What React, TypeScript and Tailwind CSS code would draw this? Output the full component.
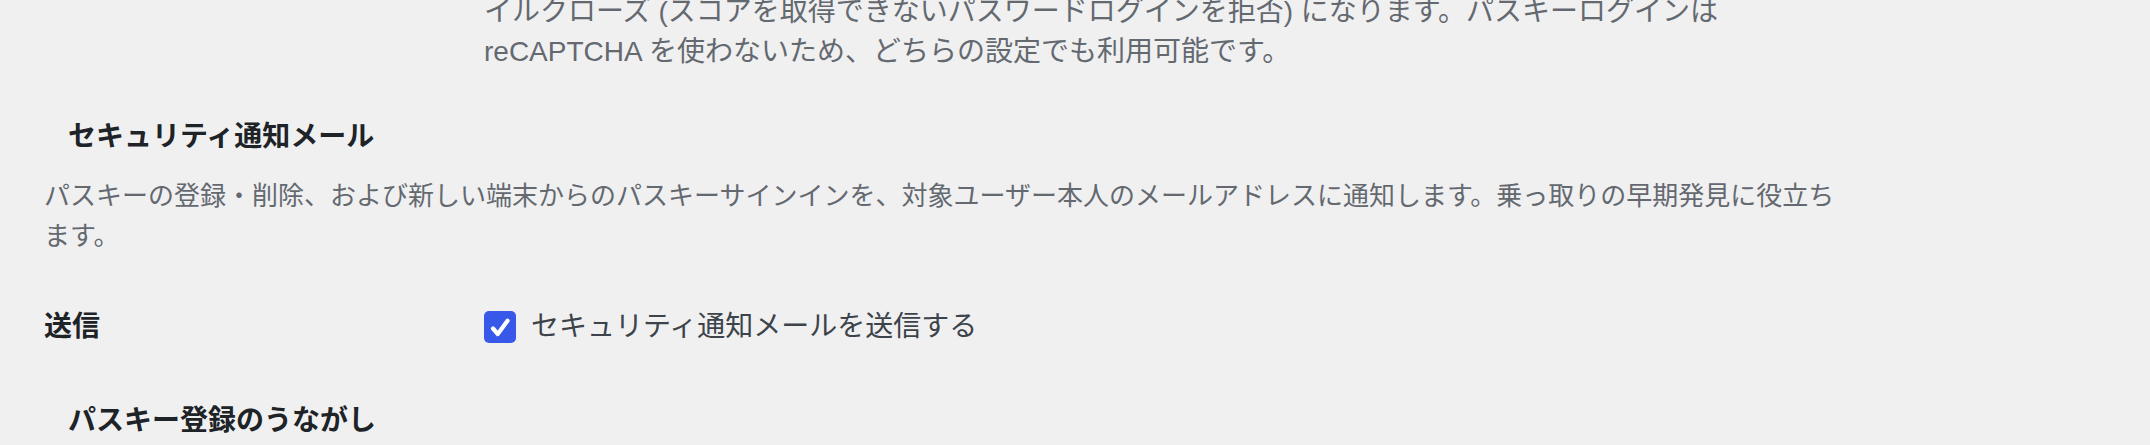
import React from 'react';

const font = { fontFamily: '"Liberation Sans", "Noto Sans CJK JP", sans-serif' };

function Checkbox() {
  return (
    <span className="flex h-[32px] w-[32px] shrink-0 items-center justify-center rounded-[5px] bg-[#3858e9]">
      <svg viewBox="0 0 32 32" className="h-[32px] w-[32px]" fill="none">
        <path
          d="M9 17.5 L13.8 23 L23.5 9.8"
          stroke="#fff"
          strokeWidth="4.2"
          strokeLinecap="round"
          strokeLinejoin="round"
        />
      </svg>
    </span>
  );
}

export default function App() {
  return (
    <div className="h-[445px] w-full overflow-hidden bg-[#f0f0f1] pl-[44px]" style={font}>
      {/* tail of previous setting description */}
      <div className="-mt-[8px] grid grid-cols-[440px_1fr]">
        <div />
        <p className="whitespace-nowrap text-[28px] leading-[40px] text-[#646970]">
          イルクローズ (スコアを取得できないパスワードログインを拒否) になります。パスキーログインは
          <br />
          reCAPTCHA を使わないため、どちらの設定でも利用可能です。
        </p>
      </div>

      {/* Security notification section */}
      <h2 className="mt-[47px] ml-[24px] text-[28px] font-bold leading-[36px] text-[#1d2327]">
        セキュリティ通知メール
      </h2>
      <p className="mt-[21px] whitespace-nowrap text-[26px] leading-[40px] text-[#646970]">
        パスキーの登録・削除、および新しい端末からのパスキーサインインを、対象ユーザー本人のメールアドレスに通知します。乗っ取りの早期発見に役立ち
        <br />
        ます。
      </p>

      <div className="mt-[55px] grid grid-cols-[440px_1fr] items-center">
        <div className="text-[28px] font-bold leading-[32px] text-[#1d2327]">送信</div>
        <label className="flex items-center gap-[15px]">
          <Checkbox />
          <span className="text-[28px] leading-[32px] text-[#3c434a]">
            セキュリティ通知メールを送信する
          </span>
        </label>
      </div>

      <h2 className="mt-[60px] ml-[24px] text-[28px] font-bold leading-[36px] text-[#1d2327]">
        パスキー登録のうながし
      </h2>
    </div>
  );
}
